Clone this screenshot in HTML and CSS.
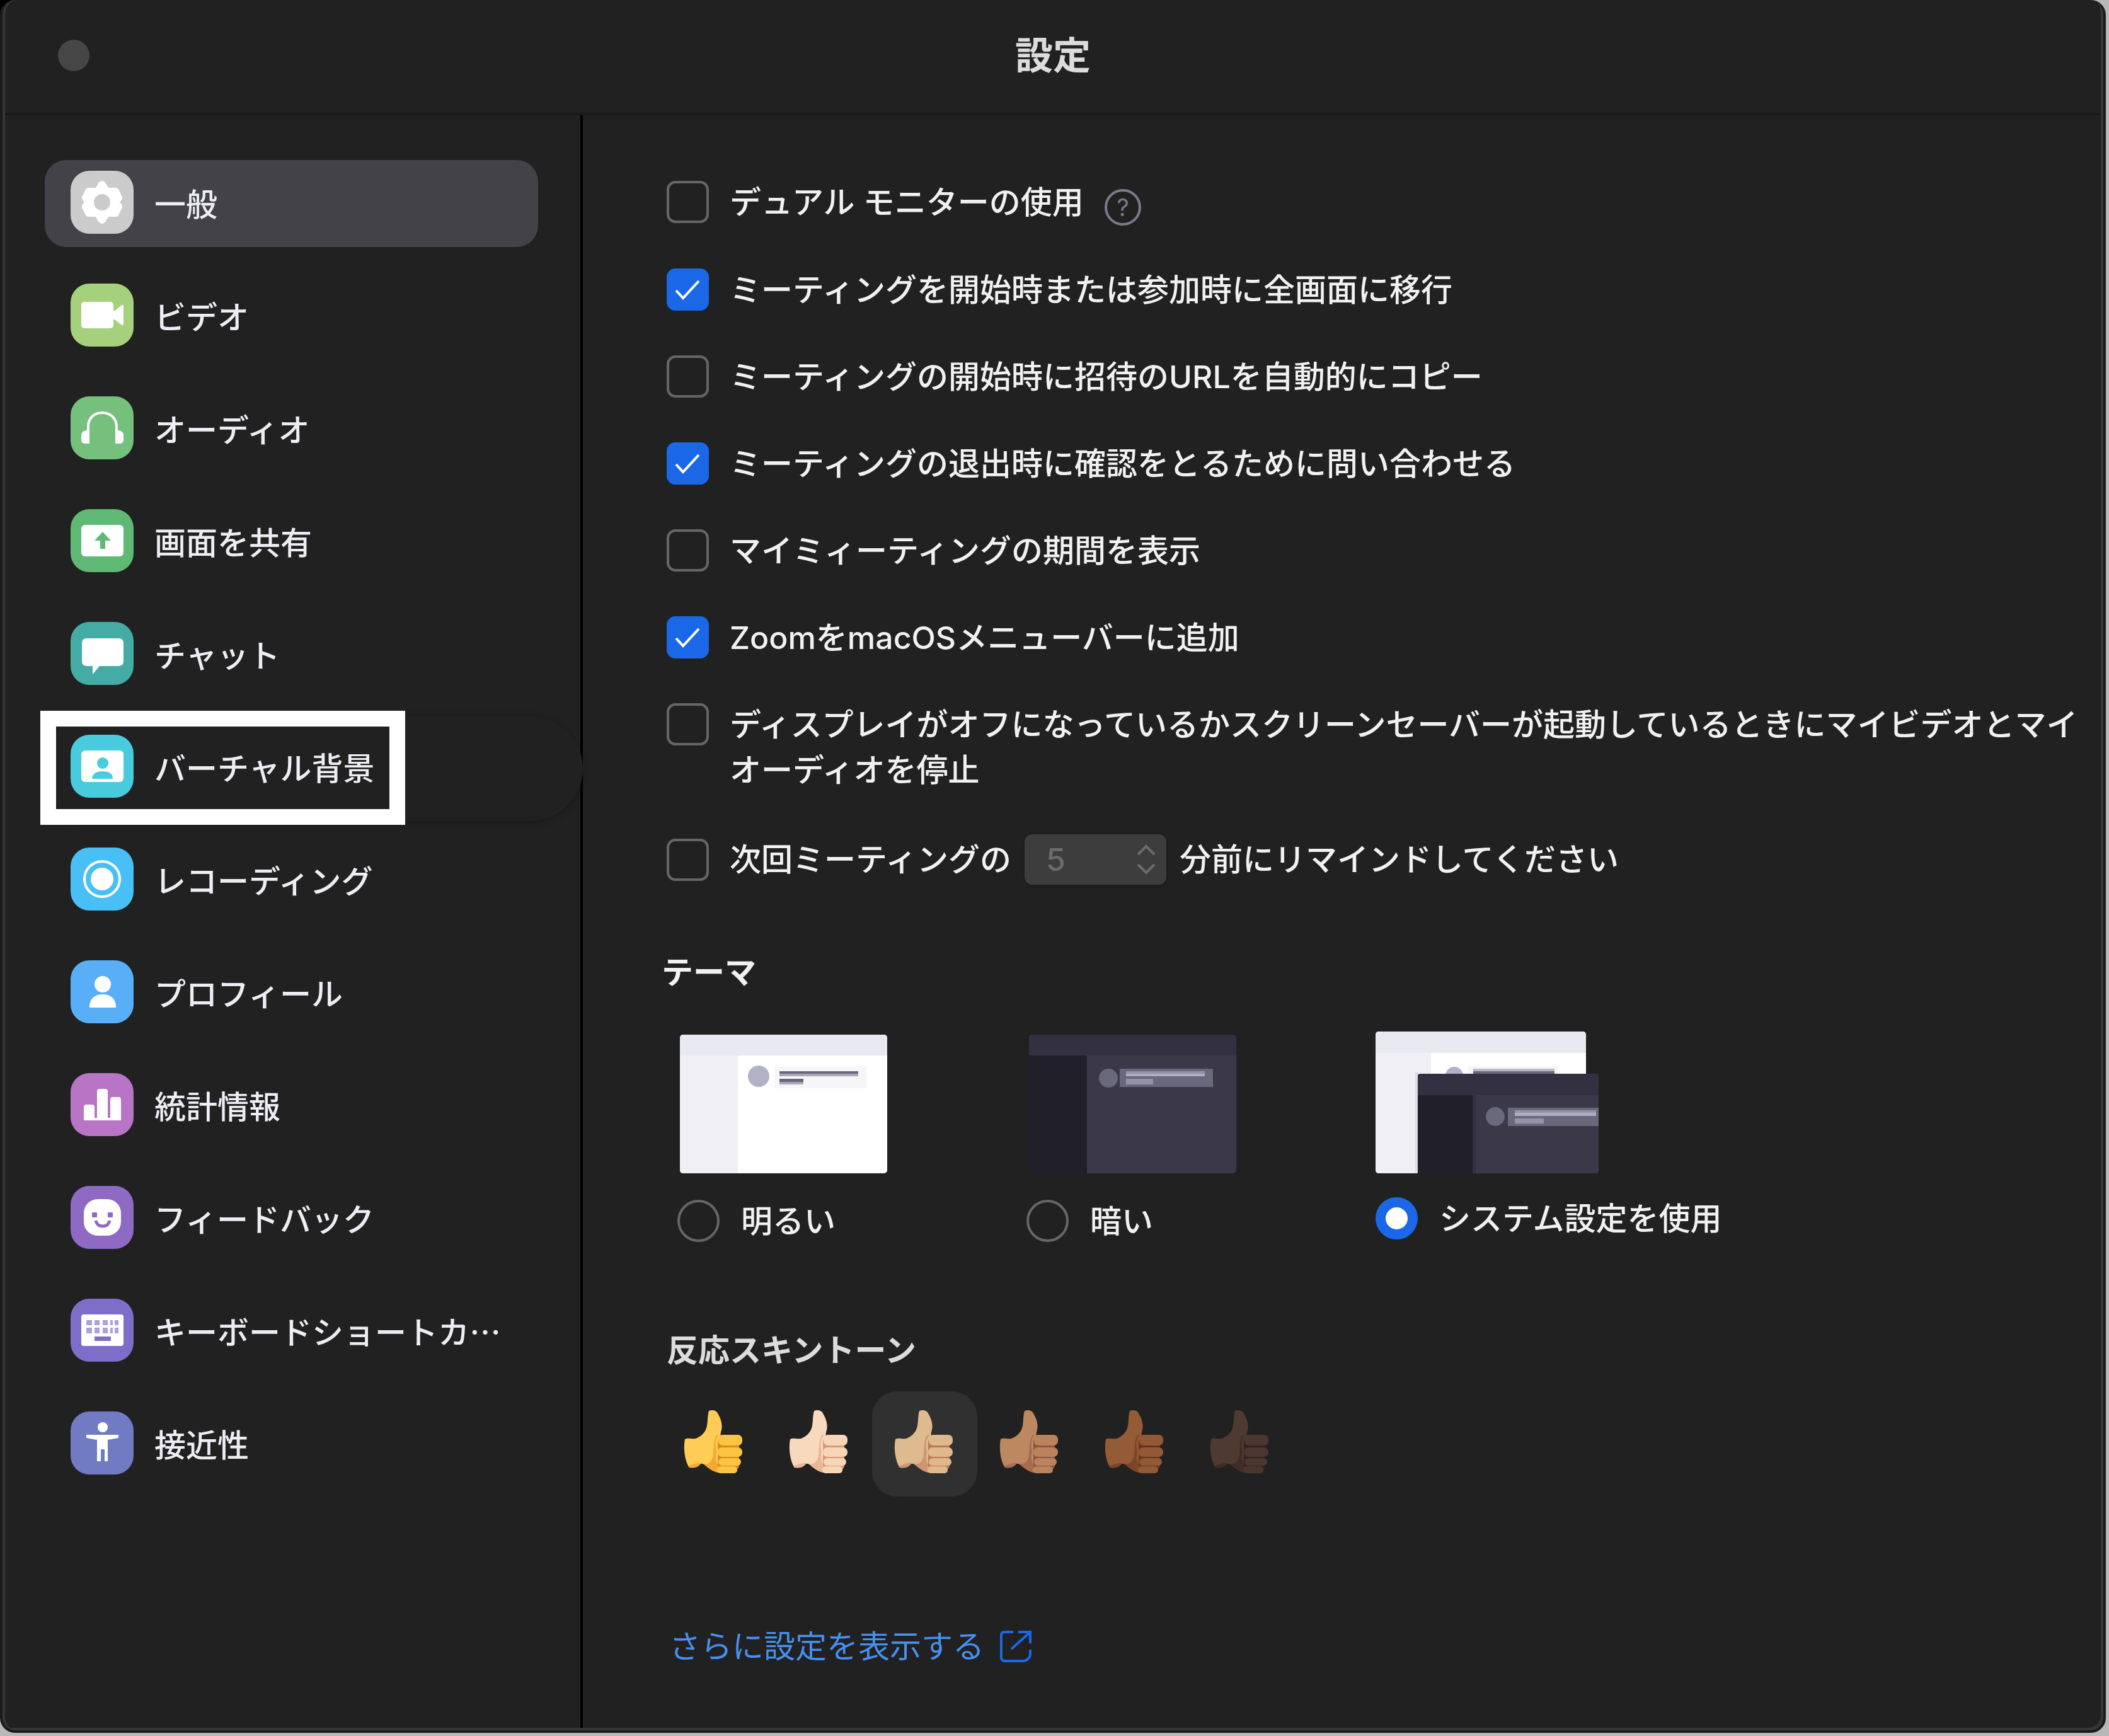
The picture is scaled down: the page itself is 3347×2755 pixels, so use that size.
FILE: index.html
```html
<!DOCTYPE html>
<html lang="ja">
<head>
<meta charset="utf-8">
<meta name="viewport" content="width=device-width, initial-scale=1">
<title>設定</title>
<link rel="stylesheet" href="styles.css">
</head>
<body>
<svg class="sprite" aria-hidden="true">
  <symbol id="thumb" viewBox="0 0 97 100">
    <path class="hand-palm" d="M43 1C48-1 55 0 57 5C62 13 65 23 63 31C62 35 61 38 62 41L66 90L60 99C53 99 48 95 43 91C38 88 34 84 30 85C26 91 19 92 12 91C5 82 2 60 5 46C9 43 15 46 22 45C30 42 35 37 38 31C42 23 40 10 43 1Z"/>
    <path class="hand-shade" d="M58 40C52 48 53 58 55 66C52 76 55 86 62 93L60 99C51 99 42 92 34 85C43 87 49 81 50 70C51 56 50 46 57 38ZM10 88C17 88 24 82 30 84C26 91 19 92 12 91Z"/>
    <rect class="hand-gap" x="57" y="44" width="34" height="50" rx="6"/>
    <rect class="hand-finger" x="58" y="39" width="38" height="17" rx="7"/>
    <rect class="hand-finger" x="57" y="59" width="39" height="15" rx="7"/>
    <rect class="hand-finger" x="58" y="76" width="36" height="12" rx="6"/>
    <rect class="hand-finger" x="56" y="89" width="32" height="11" rx="5"/>
  </symbol>
</svg>
<div class="window">
  <header class="titlebar">
    <button class="close" type="button" aria-label="閉じる"></button>
    <h1>設定</h1>
  </header>
  <div class="body">
    <nav class="sidebar" aria-label="設定">
      <button class="nav-item is-active" type="button">
        <svg class="nav-icon c-general" viewBox="0 0 100 100"><path d="M50 22L57 33H71L76 43L70 50L76 57L71 67H57L50 78L43 67H29L24 57L30 50L24 43L29 33H43Z" stroke="#fff" stroke-width="12" stroke-linejoin="round"/><circle class="cut" cx="50" cy="50" r="13"/></svg>
        <span>一般</span>
      </button>
      <button class="nav-item" type="button">
        <svg class="nav-icon c-video" viewBox="0 0 100 100"><rect x="17" y="29" width="51" height="42" rx="5"/><path d="M66 43H70L80 35Q84 32 84 37V63Q84 68 80 65L70 57H66Z"/></svg>
        <span>ビデオ</span>
      </button>
      <button class="nav-item" type="button">
        <svg class="nav-icon c-audio" viewBox="0 0 100 100"><path d="M28 66V48C28 34 38 26 50 26S73 34 73 48V66" fill="none" stroke="#fff" stroke-width="4"/><path d="M30 54V75H22Q17 75 17 68V62Q17 55 25 54ZM71 54V75H79Q84 75 84 68V62Q84 55 76 54Z"/></svg>
        <span>オーディオ</span>
      </button>
      <button class="nav-item" type="button">
        <svg class="nav-icon c-share" viewBox="0 0 100 100"><rect x="17" y="25" width="67" height="50" rx="6"/><path class="cut" d="M51 36L64 50H55V63H47V50H38Z"/></svg>
        <span>画面を共有</span>
      </button>
      <button class="nav-item" type="button">
        <svg class="nav-icon c-chat" viewBox="0 0 100 100"><path d="M26 26H76Q84 26 84 34V62Q84 70 76 70H46L35 83V70H26Q18 70 18 62V34Q18 26 26 26Z"/></svg>
        <span>チャット</span>
      </button>
      <button class="nav-item is-marked" type="button">
        <svg class="nav-icon c-virtual" viewBox="0 0 100 100"><rect x="17" y="25" width="67" height="50" rx="6"/><g class="cut"><circle cx="51" cy="45" r="9"/><path d="M34 70Q35 58 51 58T67 70Z"/></g></svg>
        <span>バーチャル背景</span>
      </button>
      <button class="nav-item" type="button">
        <svg class="nav-icon c-record" viewBox="0 0 100 100"><circle cx="50" cy="50" r="28" fill="none" stroke="#fff" stroke-width="4"/><circle cx="50" cy="50" r="18"/></svg>
        <span>レコーディング</span>
      </button>
      <button class="nav-item" type="button">
        <svg class="nav-icon c-profile" viewBox="0 0 100 100"><circle cx="51" cy="38" r="13"/><path d="M30 75V71Q33 54 51 54T72 71V75Z"/></svg>
        <span>プロフィール</span>
      </button>
      <button class="nav-item" type="button">
        <svg class="nav-icon c-stats" viewBox="0 0 100 100"><path d="M21 75V54Q21 50 25 50H34Q38 50 38 54V71H42V29Q42 25 46 25H55Q59 25 59 29V71H63V42Q63 38 67 38H76Q80 38 80 42V75Z"/></svg>
        <span>統計情報</span>
      </button>
      <button class="nav-item" type="button">
        <svg class="nav-icon c-feedback" viewBox="0 0 100 100"><rect x="21" y="21" width="59" height="58" rx="22"/><g class="cut"><rect x="34" y="42" width="8" height="8" rx="1"/><rect x="59" y="42" width="8" height="8" rx="1"/></g><path class="cut-line" d="M40 55Q42 64 51 64T62 55" fill="none" stroke-width="5"/></svg>
        <span>フィードバック</span>
      </button>
      <button class="nav-item" type="button">
        <svg class="nav-icon c-keyboard" viewBox="0 0 100 100"><rect x="17" y="25" width="67" height="50" rx="4"/><path class="cut" opacity=".65" d="M25 34h9v8h-9zM38 34h8v8h-8zM51 34h8v8h-8zM63 34h4v8h-4zM70 34h6v8h-6zM25 46h9v9h-9zM38 46h8v9h-8zM51 46h8v9h-8zM63 46h4v9h-4zM70 46h6v9h-6z"/><rect class="cut" x="38" y="60" width="26" height="7"/></svg>
        <span>キーボードショートカ…</span>
      </button>
      <button class="nav-item" type="button">
        <svg class="nav-icon c-access" viewBox="0 0 100 100"><circle cx="51" cy="25" r="8"/><path d="M25 37H76V42L59 45V79H54V60H48V79H42V45L25 42Z"/></svg>
        <span>接近性</span>
      </button>
    </nav>
    <main class="content">
      <div class="options">
        <div class="option">
          <input class="check" type="checkbox" id="dual"><label for="dual">デュアル モニターの使用</label>
          <button class="help" type="button" aria-label="ヘルプ">?</button>
        </div>
        <div class="option"><input class="check" type="checkbox" id="full" checked><label for="full">ミーティングを開始時または参加時に全画面に移行</label></div>
        <div class="option"><input class="check" type="checkbox" id="copy"><label for="copy">ミーティングの開始時に招待のURLを自動的にコピー</label></div>
        <div class="option"><input class="check" type="checkbox" id="leave" checked><label for="leave">ミーティングの退出時に確認をとるために問い合わせる</label></div>
        <div class="option"><input class="check" type="checkbox" id="time"><label for="time">マイミィーティングの期間を表示</label></div>
        <div class="option"><input class="check" type="checkbox" id="menubar" checked><label for="menubar">ZoomをmacOSメニューバーに追加</label></div>
        <div class="option"><input class="check" type="checkbox" id="saver"><label for="saver">ディスプレイがオフになっているかスクリーンセーバーが起動しているときにマイビデオとマイオーディオを停止</label></div>
        <div class="option option-remind">
          <input class="check" type="checkbox" id="remind"><label for="remind">次回ミーティングの</label>
          <span class="select-box">
            <select aria-label="分" disabled><option>5</option></select>
            <svg class="select-arrows" viewBox="0 0 32 48" aria-hidden="true"><path d="M3 16L16 3L29 16M3 32L16 45L29 32"/></svg>
          </span>
          <label for="remind">分前にリマインドしてください</label>
        </div>
      </div>

      <section class="themes">
        <h2>テーマ</h2>
        <div class="theme-list">
          <label class="theme">
            <svg width="329" height="220" viewBox="0 0 329 220"><g clip-path="inset(0 round 5px)"><rect width="329" height="220" fill="#fff"/><rect y="33" width="92" height="187" fill="#f0eff5"/><rect width="329" height="33" fill="#e9e9f2"/></g><circle cx="125" cy="66" r="17" fill="#b1b2c6"/><rect x="150" y="50" width="146" height="35" fill="#f6f6f9"/><path d="M158 58h125v4H158zM158 70h38v5h-38z" fill="#6a677c"/><path d="M158 62h125v4H158zM158 75h38v4h-38z" fill="#aaa8b8"/></svg>
            <span class="theme-choice"><input class="radio" type="radio" name="theme">明るい</span>
          </label>
          <label class="theme">
            <svg width="329" height="220" viewBox="0 0 329 220"><g clip-path="inset(0 round 5px)"><rect width="329" height="220" fill="#3b3848"/><rect y="33" width="92" height="187" fill="#201f2a"/><rect width="329" height="33" fill="#333141"/></g><circle cx="126" cy="69" r="15" fill="#6a687b"/><rect x="144" y="54" width="148" height="29" fill="#6a687b"/><path d="M154 58h125v4H154zM154 70h43v9h-43z" fill="#9593a7"/><path d="M154 62h125v4H154z" fill="#afadc2"/></svg>
            <span class="theme-choice"><input class="radio" type="radio" name="theme">暗い</span>
          </label>
          <label class="theme theme-system">
            <svg width="354" height="225" viewBox="0 0 354 225"><g clip-path="inset(0 round 5px)"><rect width="334" height="225" fill="#fff"/><rect y="34" width="88" height="191" fill="#f0eff5"/><rect width="334" height="34" fill="#e9e9f2"/></g><circle cx="125" cy="70" r="14" fill="#b1b2c6"/><path d="M146 55h145v12H146z" fill="#f6f6f9"/><path d="M155 59h129v4H155z" fill="#b9b8c4"/><path d="M155 63h129v4H155z" fill="#6a677c"/><path d="M63 64h4v161h-4z" fill="#dddde6"/><path d="M67 225V71Q67 67 71 67H354V221Q354 225 350 225Z" fill="#3b3848"/><path d="M67 101H154V225H67z" fill="#201f2a"/><path d="M67 101V71Q67 67 71 67H354V101ZM154 101h5v124h-5z" fill="#333141"/><circle cx="190" cy="135" r="15" fill="#6a687b"/><rect x="210" y="121" width="144" height="29" fill="#6a687b"/><path d="M221 125h129v4H221zM221 138h46v8h-46z" fill="#9593a7"/><path d="M221 129h129v5H221z" fill="#afadc2"/></svg>
            <span class="theme-choice"><input class="radio" type="radio" name="theme" checked>システム設定を使用</span>
          </label>
        </div>
      </section>

      <section class="tones">
        <h2>反応スキントーン</h2>
        <div class="tone-list">
          <label class="tone tone-default"><input type="radio" name="tone" aria-label="標準"><svg><use href="#thumb"/></svg></label>
          <label class="tone tone-light"><input type="radio" name="tone" aria-label="明るい肌"><svg><use href="#thumb"/></svg></label>
          <label class="tone tone-medium-light"><input type="radio" name="tone" aria-label="やや明るい肌" checked><svg><use href="#thumb"/></svg></label>
          <label class="tone tone-medium"><input type="radio" name="tone" aria-label="中間の肌"><svg><use href="#thumb"/></svg></label>
          <label class="tone tone-medium-dark"><input type="radio" name="tone" aria-label="やや濃い肌"><svg><use href="#thumb"/></svg></label>
          <label class="tone tone-dark"><input type="radio" name="tone" aria-label="濃い肌"><svg><use href="#thumb"/></svg></label>
        </div>
      </section>

      <a class="more" href="#">さらに設定を表示する
        <svg viewBox="0 0 50 50" aria-hidden="true"><path d="M21 2H7Q2 2 2 7V42Q2 48 8 48H37Q48 46 48 36V30M29 2H48V20M48 2L18 29"/></svg>
      </a>
    </main>
  </div>
</div>
</body>
</html>
```
FILE: styles.css
```css
*,
*::before,
*::after {
  box-sizing: border-box;
}

body {
  margin: 0;
  min-height: 100vh;
  display: flex;
  padding: 0 5px 5px 0;
  background: linear-gradient(90deg, #000 50%, #b8b8b8 50%) top / 100% 60px no-repeat, #b8b8b8;
  color: #f1f1f1;
  font: 500 50px/72px Inter, "Noto Sans CJK JP", sans-serif;
}

button,
select {
  font: inherit;
  color: inherit;
}

h1,
h2 {
  margin: 0;
  font-weight: 700;
}

h2 {
  font-size: 50px;
}

.sprite {
  position: absolute;
  width: 0;
  height: 0;
}

.window {
  flex: 1;
  display: flex;
  flex-direction: column;
  border: 4px solid #1b1b1b;
  border-top: 0;
  border-radius: 24px;
  background: #212121;
  box-shadow: inset 4px 0 #363636, inset -4px -4px #363636;
  padding: 0 4px 4px;
}

/* Title bar */
.titlebar {
  display: grid;
  grid-template-columns: 1fr auto 1fr;
  align-items: center;
  height: 183px;
  padding: 0 84px 4px;
  border-bottom: 4px solid #1a1a1a;
}

.titlebar h1 {
  font-size: 60px;
  color: #dcdcdc;
}

.close {
  width: 50px;
  height: 50px;
  padding: 0;
  border: 0;
  border-radius: 50%;
  background: #464646;
}

.body {
  flex: 1;
  display: flex;
}

/* Sidebar */
.sidebar {
  flex: none;
  width: 917px;
  display: flex;
  flex-direction: column;
  gap: 41px;
  padding: 71px 67px 71px 63px;
  border-right: 4px solid #000;
  font-family: "Noto Sans CJK JP", sans-serif;
}

.nav-item {
  position: relative;
  height: 138px;
  display: flex;
  align-items: center;
  gap: 33px;
  padding: 0 41px 4px;
  border: 0;
  border-radius: 34px;
  background: none;
  color: #ededf4;
  white-space: nowrap;
}

.nav-item > * {
  position: relative;
  z-index: 1;
}

.nav-item.is-active {
  background: #424248;
}

.nav-item.is-marked::before {
  content: "";
  position: absolute;
  inset: -12px -71px -16px 6px;
  border-radius: 90px 120px 120px 90px;
  background: #212121;
  box-shadow: 0 2px 12px rgba(0, 0, 0, 0.25);
}

.nav-item.is-marked::after {
  content: "";
  position: absolute;
  left: -7px;
  top: -21px;
  width: 579px;
  height: 181px;
  border: 25px solid #fff;
}

.nav-icon {
  flex: none;
  width: 100px;
  height: 100px;
  border-radius: 30px;
  background: var(--tile);
  fill: #fff;
}

.nav-icon .cut {
  fill: var(--tile);
}

.nav-icon .cut-line {
  stroke: var(--tile);
}

.c-general { --tile: #cbcbcb; }
.c-video { --tile: #a5d07c; }
.c-audio { --tile: #76c07d; }
.c-share { --tile: #5fb974; }
.c-chat { --tile: #44aca5; }
.c-virtual { --tile: #47cbdd; }
.c-record { --tile: #48bff5; }
.c-profile { --tile: #59aff7; }
.c-stats { --tile: #b875c6; }
.c-feedback { --tile: #8e6ac4; }
.c-keyboard { --tile: #7f6ec9; }
.c-access { --tile: #707bc4; }

/* Settings */
.content {
  flex: 1;
  min-width: 0;
  display: flex;
  flex-direction: column;
  align-items: flex-start;
  padding: 102px 20px 80px 125px;
}

.options {
  display: flex;
  flex-direction: column;
  gap: 66px;
  padding-left: 8px;
}

.option {
  display: flex;
  align-items: flex-start;
  gap: 33px;
}

.check,
.radio {
  appearance: none;
  flex: none;
  width: 67px;
  height: 67px;
  margin: 2px 0 0;
  border: 4px solid #666;
  border-radius: 14px;
}

.check:checked {
  border: 0;
  background: #1a68e8 url("data:image/svg+xml,%3Csvg xmlns='http://www.w3.org/2000/svg' viewBox='0 0 67 67'%3E%3Cpath d='M15 35L26 47L51 20' fill='none' stroke='%23fff' stroke-width='4'/%3E%3C/svg%3E");
}

.radio {
  margin: 0;
  border-radius: 50%;
}

.radio:checked {
  border: 16px solid #1a68e8;
  background: #fff;
}

.help {
  width: 58px;
  height: 58px;
  margin-top: 15px;
  padding: 0;
  border: 4px solid #7c7a8a;
  border-radius: 50%;
  background: none;
  color: #7c7a8a;
  font-size: 38px;
  font-weight: 400;
  line-height: 50px;
}

.option-remind {
  align-items: center;
  gap: 21px;
}

.option-remind .check {
  margin: 0 12px 0 0;
}

.select-box {
  display: grid;
  align-items: center;
}

.select-box > * {
  grid-area: 1 / 1;
}

.select-box select {
  appearance: none;
  width: 225px;
  height: 80px;
  padding: 0 34px;
  border: 0;
  border-radius: 12px;
  background: #3d3d3d;
  box-shadow: 0 2px 4px #1b1b1b;
  color: #6b6b6b;
  opacity: 1;
}

.select-arrows {
  justify-self: end;
  width: 32px;
  height: 48px;
  margin-right: 16px;
  fill: none;
  stroke: #6b6b6b;
  stroke-width: 4;
  pointer-events: none;
}

/* Themes */
.themes {
  margin-top: 103px;
}

.theme-list {
  display: grid;
  grid-template-columns: 554px 554px auto;
  align-items: start;
  margin-top: 58px;
  padding-left: 25px;
}

.theme {
  display: flex;
  flex-direction: column;
  gap: 42px;
  padding-top: 5px;
}

.theme > svg {
  margin-left: 4px;
}

.theme-system {
  gap: 38px;
  padding-top: 0;
}

.theme-system > svg {
  margin-left: 0;
}

.theme-choice {
  display: flex;
  align-items: center;
  gap: 34px;
  height: 67px;
}

/* Skin tones */
.tones {
  margin-top: 136px;
}

.tones h2 {
  padding-left: 8px;
  color: #dcdcdc;
}

.tone-list {
  display: flex;
  margin-top: 29px;
}

.tone {
  display: grid;
  place-items: center;
  width: 167px;
  height: 167px;
}

.tone > * {
  grid-area: 1 / 1;
}

.tone input {
  appearance: none;
  width: 100%;
  height: 100%;
  margin: 0;
  border-radius: 40px;
}

.tone input:checked {
  background: #303030;
}

.tone svg {
  width: 97px;
  height: 100px;
  margin: 0 6px 8px 0;
  pointer-events: none;
}

.hand-palm { fill: var(--skin); }
.hand-finger { fill: var(--finger); }
.hand-shade { fill: var(--shade); }
.hand-gap { fill: var(--gap); }

.tone-default { --skin: #ffcd55; --finger: #fbc443; --shade: #f3a92f; --gap: #d98a1c; }
.tone-light { --skin: #f8d9bd; --finger: #f7d6b8; --shade: #eab897; --gap: #d79a78; }
.tone-medium-light { --skin: #dfb98f; --finger: #e0b88d; --shade: #cd9670; --gap: #b97a52; }
.tone-medium { --skin: #bd8860; --finger: #bb835c; --shade: #a56c4f; --gap: #8d5640; }
.tone-medium-dark { --skin: #935c37; --finger: #915935; --shade: #7c4526; --gap: #66361d; }
.tone-dark { --skin: #4e3a31; --finger: #4b372f; --shade: #402d27; --gap: #33231f; }

.more {
  display: flex;
  align-items: center;
  gap: 25px;
  margin-top: 202px;
  padding-left: 12px;
  color: #478ff0;
  font-weight: 400;
  text-decoration: none;
}

.more svg {
  width: 50px;
  height: 50px;
  fill: none;
  stroke: #1a68e8;
  stroke-width: 4;
}
```
